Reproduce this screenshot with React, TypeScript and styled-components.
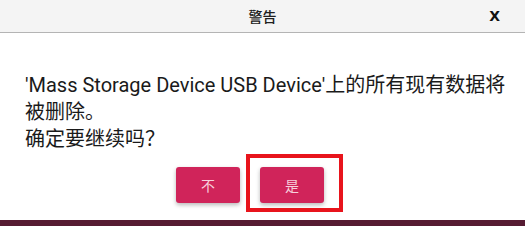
import React from "react";
import styled, { createGlobalStyle } from "styled-components";

const GlobalStyle = createGlobalStyle`
  html, body {
    margin: 0;
    padding: 0;
    background: #ffffff;
  }
  body {
    font-family: Roboto, "Noto Sans CJK SC", sans-serif;
  }
`;

const Window = styled.div`
  width: 525px;
  height: 226px;
  display: flex;
  flex-direction: column;
  background: #ffffff;
  overflow: hidden;
`;

const TitleBar = styled.div`
  height: 32px;
  flex-shrink: 0;
  display: flex;
  align-items: center;
  justify-content: center;
  position: relative;
  background: #f4f4f4;
  border-bottom: 1px solid #b4b4b4;
`;

const Title = styled.span`
  font-family: "Noto Sans CJK SC", sans-serif;
  font-size: 14px;
  font-weight: 500;
  color: #202020;
`;

const CloseButton = styled.span`
  position: absolute;
  right: 25px;
  top: 50%;
  transform: translateY(-50%);
  font-family: "DejaVu Sans", sans-serif;
  font-size: 14px;
  font-weight: bold;
  color: #111111;
`;

const Body = styled.div`
  flex: 1;
  display: flex;
  flex-direction: column;
  padding: 39px 8px 0 25px;
`;

const Message = styled.p`
  margin: 0;
  font-family: Roboto, "Noto Sans CJK SC", sans-serif;
  font-size: 20px;
  line-height: 27px;
  color: #1a1a1a;
`;

const ButtonRow = styled.div`
  display: flex;
  justify-content: center;
  gap: 20px;
  margin-top: 14px;
  padding-right: 42px;
`;

const ButtonWrap = styled.div`
  position: relative;
`;

const Button = styled.button`
  width: 64px;
  height: 36px;
  border: none;
  border-radius: 3px;
  background: #d0245a;
  color: #f7d0dc;
  font-family: "Noto Sans CJK SC", sans-serif;
  font-size: 14px;
  box-shadow: 0 2px 4px rgba(0, 0, 0, 0.28);
  cursor: pointer;
`;

const Highlight = styled.div`
  position: absolute;
  left: -14px;
  top: -13px;
  width: 97px;
  height: 58px;
  box-sizing: border-box;
  border: 4px solid #e8141c;
  pointer-events: none;
`;

const BottomStrip = styled.div`
  height: 6px;
  flex-shrink: 0;
  background: #561b32;
`;

export default function App() {
  return (
    <>
      <GlobalStyle />
      <Window>
        <TitleBar>
          <Title>警告</Title>
          <CloseButton>X</CloseButton>
        </TitleBar>
        <Body>
          <Message>
            'Mass Storage Device USB Device'上的所有现有数据将被删除。
            <br />
            确定要继续吗？
          </Message>
          <ButtonRow>
            <ButtonWrap>
              <Button>不</Button>
            </ButtonWrap>
            <ButtonWrap>
              <Button>是</Button>
              <Highlight />
            </ButtonWrap>
          </ButtonRow>
        </Body>
        <BottomStrip />
      </Window>
    </>
  );
}
